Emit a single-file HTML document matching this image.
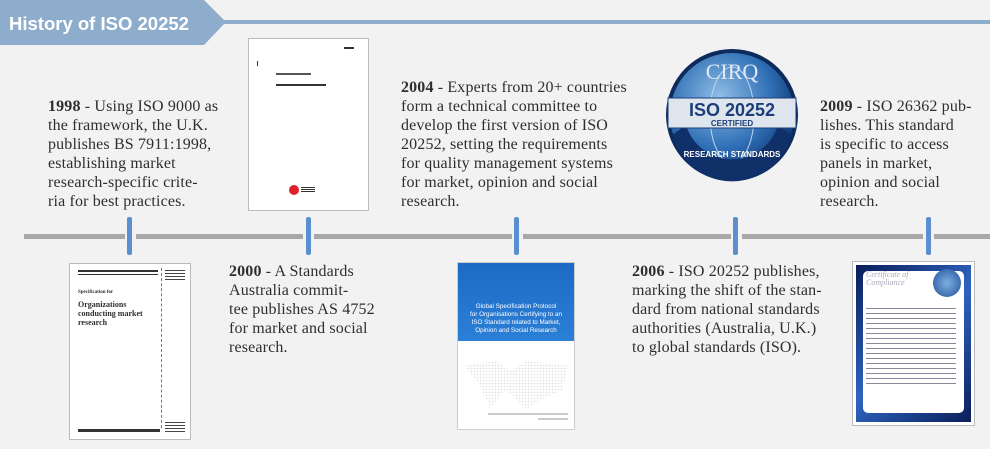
<!DOCTYPE html>
<html><head><meta charset="utf-8"><style>
*{margin:0;padding:0;box-sizing:border-box}
body{width:990px;height:449px;background:#f2f2f2;position:relative;overflow:hidden;font-family:"Liberation Serif",serif;color:#2e2e2e}
.t{position:absolute;font-size:16px;line-height:19px;white-space:nowrap;letter-spacing:0.15px}
.t b{font-weight:bold}
.doc{position:absolute;background:#fff;border:1px solid #bbb}
.mk{position:absolute;width:5px;height:38px;top:217px;background:#5b8fd0;border-radius:2px}
.ln{position:absolute;top:234px;height:5px;background:#a8a8a8}
</style></head><body>
<svg style="position:absolute;left:0;top:0" width="990" height="46">
<rect x="215" y="20" width="775" height="4" fill="#8eadcc"/>
<polygon points="0,0 204,0 226,22 204,45 0,45" fill="#8eadcc"/>
<text x="9" y="30" font-family="Liberation Sans" font-weight="bold" font-size="18.5" fill="#fff">History of ISO 20252</text>
</svg>
<div class="ln" style="left:24px;width:101px"></div>
<div class="ln" style="left:136px;width:167px"></div>
<div class="ln" style="left:314px;width:198px"></div>
<div class="ln" style="left:523px;width:208px"></div>
<div class="ln" style="left:742px;width:181px"></div>
<div class="ln" style="left:934px;width:56px"></div>
<div class="mk" style="left:127px"></div>
<div class="mk" style="left:306px"></div>
<div class="mk" style="left:514px"></div>
<div class="mk" style="left:733px"></div>
<div class="mk" style="left:926px"></div>

<div class="t" style="left:48px;top:97px"><b>1998</b> - Using ISO 9000 as<br>the framework, the U.K.<br>publishes BS 7911:1998,<br>establishing market<br>research-specific crite-<br>ria for best practices.</div>
<div class="t" style="left:229px;top:262px"><b>2000</b> - A Standards<br>Australia commit-<br>tee publishes AS 4752<br>for market and social<br>research.</div>
<div class="t" style="left:401px;top:78px"><b>2004</b> - Experts from 20+ countries<br>form a technical committee to<br>develop the first version of ISO<br>20252, setting the requirements<br>for quality management systems<br>for market, opinion and social<br>research.</div>
<div class="t" style="left:632px;top:262px"><b>2006</b> - ISO 20252 publishes,<br>marking the shift of the stan-<br>dard from national standards<br>authorities (Australia, U.K.)<br>to global standards (ISO).</div>
<div class="t" style="left:820px;top:97px"><b>2009</b> - ISO 26362 pub-<br>lishes. This standard<br>is specific to access<br>panels in market,<br>opinion and social<br>research.</div>

<div class="doc" style="left:69px;top:263px;width:122px;height:177px">
<div style="position:absolute;left:8px;top:6px;width:80px;height:2px;background:#333"></div>
<div style="position:absolute;left:8px;top:10px;width:80px;height:1px;background:#333"></div>
<div style="position:absolute;left:91px;top:4px;width:0;height:160px;border-left:1px dashed #777"></div>
<div style="position:absolute;left:95px;top:6px;width:20px;height:10px;background:repeating-linear-gradient(#444 0 1px,#fff 1px 3px)"></div>
<div style="position:absolute;left:8px;top:26px;font-size:5px;font-weight:bold">Specification for</div>
<div style="position:absolute;left:8px;top:36px;font-size:8px;line-height:9px;font-weight:bold">Organizations<br>conducting market<br>research</div>
<div style="position:absolute;left:8px;top:165px;width:82px;height:3px;background:#333"></div>
<div style="position:absolute;left:95px;top:158px;width:20px;height:12px;background:repeating-linear-gradient(#444 0 1px,#fff 1px 3px)"></div>
</div>
<div class="doc" style="left:248px;top:38px;width:121px;height:173px">
<div style="position:absolute;left:95px;top:8px;width:10px;height:2px;background:#333"></div>
<div style="position:absolute;left:8px;top:22px;width:1px;height:5px;background:#333"></div>
<div style="position:absolute;left:27px;top:34px;width:35px;height:2px;background:#555"></div>
<div style="position:absolute;left:27px;top:45px;width:50px;height:2px;background:#333"></div>
<div style="position:absolute;left:40px;top:146px;width:10px;height:10px;border-radius:50%;background:#e0202a"></div>
<div style="position:absolute;left:52px;top:148px;width:14px;height:6px;background:repeating-linear-gradient(#333 0 1px,#fff 1px 2px)"></div>
</div>
<div class="doc" style="left:457px;top:262px;width:118px;height:168px;border-color:#ccc">
<div style="position:absolute;left:0;top:0;width:116px;height:78px;background:linear-gradient(#1c6ac4,#2b7fd6)"></div>
<div style="position:absolute;left:0;top:40px;width:116px;text-align:center;font-family:'Liberation Sans';font-size:6.3px;line-height:8px;color:#fff">Global Specification Protocol<br>for Organisations Certifying to an<br>ISO Standard related to Market,<br>Opinion and Social Research</div>
<div style="position:absolute;left:6px;top:98px;width:104px;height:48px;background:radial-gradient(#e6e6e6 40%,transparent 45%) 0 0/3px 3px;opacity:.9;clip-path:polygon(0 10%,30% 0,45% 20%,60% 0,100% 10%,95% 60%,75% 80%,60% 100%,40% 60%,25% 100%,15% 50%)"></div>
<div style="position:absolute;left:30px;top:150px;width:80px;height:2px;background:#ccc"></div>
<div style="position:absolute;left:80px;top:155px;width:30px;height:2px;background:#ccc"></div>
</div>
<div class="doc" style="left:853px;top:262px;width:121px;height:163px;background:linear-gradient(135deg,#0a1e5a,#2f63c0 50%,#0a1e5a);border:3px solid #fff;outline:1px solid #bbb">
<div style="position:absolute;left:7px;top:6px;width:101px;height:142px;background:#fff;border-radius:5px"></div>
<div style="position:absolute;left:10px;top:6px;font-size:8px;line-height:8px;color:#aab;font-style:italic">Certificate of<br>Compliance</div>
<div style="position:absolute;left:77px;top:4px;width:28px;height:28px;border-radius:50%;background:radial-gradient(#7fb0e0,#1f4f9a)"></div>
<div style="position:absolute;left:10px;top:43px;width:90px;height:80px;background:repeating-linear-gradient(#889 0 1px,#fff 1px 5px)"></div>
</div>
<svg style="position:absolute;left:660px;top:45px" width="140" height="140">
<defs><radialGradient id="g" cx="40%" cy="35%" r="70%"><stop offset="0" stop-color="#8fbde6"/><stop offset=".6" stop-color="#2f6fb5"/><stop offset="1" stop-color="#0d2f6a"/></radialGradient></defs>
<circle cx="72" cy="70" r="66" fill="#0d2a5c"/>
<circle cx="72" cy="70" r="62" fill="url(#g)"/>
<ellipse cx="72" cy="70" rx="22" ry="48" fill="none" stroke="#bcd6f0" stroke-width="1"/>
<line x1="24" y1="70" x2="120" y2="70" stroke="#bcd6f0"/>
<path d="M12 90 A62 62 0 0 0 132 90 L118 80 A48 48 0 0 1 26 80Z" fill="#10306a"/>
<text x="72" y="34" text-anchor="middle" font-family="Liberation Serif" font-size="22" fill="#dfe9f5">CIRQ</text>
<rect x="8" y="53" width="128" height="30" fill="#dfe5ec" stroke="#1b3e7a"/>
<text x="72" y="71" text-anchor="middle" font-family="Liberation Sans" font-weight="bold" font-size="18" fill="#1b3e7a">ISO 20252</text>
<text x="72" y="81" text-anchor="middle" font-family="Liberation Sans" font-weight="bold" font-size="8" fill="#1b3e7a">CERTIFIED</text>
<text x="72" y="112" text-anchor="middle" font-family="Liberation Sans" font-weight="bold" font-size="8" fill="#fff">RESEARCH STANDARDS</text>
</svg>
</body></html>
